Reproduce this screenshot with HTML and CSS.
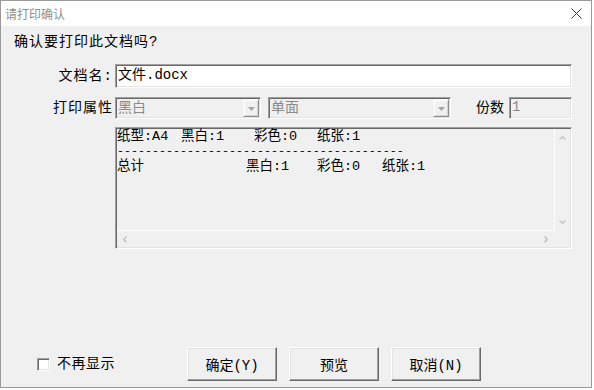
FILE: index.html
```html
<!DOCTYPE html>
<html lang="zh-CN">
<head>
<meta charset="utf-8">
<title>请打印确认</title>
<link rel="stylesheet" href="styles.css">
</head>
<body>
<div class="window">
  <div class="titlebar">
    <span class="title">请打印确认</span>
    <svg class="close" width="11" height="11" viewBox="0 0 11 11"><path d="M0.5 0.5L10.5 10.5M10.5 0.5L0.5 10.5" stroke="#3c3c3c" stroke-width="1" fill="none"/></svg>
  </div>
  <div class="body">
    <div class="question">确认要打印此文档吗?</div>
    <div class="row row-name">
      <span class="label">文档名:</span>
      <div class="edit name">文件.docx</div>
    </div>
    <div class="row row-attr">
      <span class="label">打印属性</span>
      <div class="combo c1"><span class="val">黑白</span><span class="drop"><svg width="7" height="4" viewBox="0 0 7 4"><path d="M0 0H7L3.5 4Z" fill="#a6a6a6"/></svg></span></div>
      <div class="combo c2"><span class="val">单面</span><span class="drop"><svg width="7" height="4" viewBox="0 0 7 4"><path d="M0 0H7L3.5 4Z" fill="#a6a6a6"/></svg></span></div>
      <span class="label2">份数</span>
      <div class="edit copies">1</div>
    </div>
    <div class="listbox">
      <div class="list-content">
        <div class="line"><span class="cell w64">纸型:A4</span><span class="cell w73">黑白:1</span><span class="cell w63">彩色:0</span><span class="cell">纸张:1</span></div>
        <div class="line dashes">-----------------------------------------</div>
        <div class="line"><span class="cell w129">总计</span><span class="cell w71">黑白:1</span><span class="cell w65">彩色:0</span><span class="cell">纸张:1</span></div>
      </div>
      <div class="vscroll">
        <svg width="7" height="4" viewBox="0 0 7 4"><path d="M0.5 3.5L3.5 0.8L6.5 3.5" stroke="#c2c2c2" stroke-width="1.4" fill="none"/></svg>
        <svg width="7" height="4" viewBox="0 0 7 4"><path d="M0.5 0.5L3.5 3.2L6.5 0.5" stroke="#c2c2c2" stroke-width="1.4" fill="none"/></svg>
      </div>
      <div class="hscroll">
        <svg width="4" height="7" viewBox="0 0 4 7"><path d="M3.5 0.5L0.8 3.5L3.5 6.5" stroke="#c2c2c2" stroke-width="1.4" fill="none"/></svg>
        <svg width="4" height="7" viewBox="0 0 4 7"><path d="M0.5 0.5L3.2 3.5L0.5 6.5" stroke="#c2c2c2" stroke-width="1.4" fill="none"/></svg>
      </div>
      <div class="corner"></div>
    </div>
    <div class="footer">
      <label class="check"><span class="box"></span><span class="check-text">不再显示</span></label>
      <div class="buttons">
        <button class="btn" type="button">确定(Y)</button>
        <button class="btn" type="button">预览</button>
        <button class="btn" type="button">取消(N)</button>
      </div>
    </div>
  </div>
</div>
</body>
</html>
```

FILE: styles.css
```css
* { box-sizing: border-box; }
html, body { margin: 0; padding: 0; background: #ffffff; }
body {
  font-family: "Liberation Mono", "Noto Sans CJK SC", monospace;
  font-size: 14px;
  color: #000;
}
.window {
  width: 592px;
  height: 388px;
  border: 1px solid #9a9a9a;
  background: #f0f0f0;
  display: flex;
  flex-direction: column;
}
.titlebar {
  height: 25px;
  flex: none;
  background: #fff;
  display: flex;
  align-items: center;
  justify-content: space-between;
  padding: 0 9px 0 4px;
}
.title {
  font-family: "Noto Sans CJK SC", sans-serif;
  font-size: 12px;
  line-height: 16px;
  color: #8e8e8e;
}
.close { display: block; }
.body {
  flex: 1;
  display: flex;
  flex-direction: column;
  padding: 7px 19px 6px 13px;
}
.question { height: 18px; line-height: 18px; letter-spacing: 1px; }
.row { display: flex; align-items: center; }
.row-name { margin-top: 13px; height: 24px; }
.row-attr { margin-top: 9px; height: 22px; }
.label {
  width: 101px;
  flex: none;
  text-align: right;
  padding-right: 2px;
  letter-spacing: 1px;
  line-height: 20px;
}
.edit {
  border: 1px solid;
  border-color: #a0a0a0 #ffffff #ffffff #a0a0a0;
  box-shadow: inset 1px 1px #696969, inset -1px -1px #e3e3e3;
  padding-left: 2px;
}
.name { width: 457px; height: 24px; background: #fff; line-height: 21px; }
.copies { width: 63px; height: 22px; background: #f0f0f0; color: #8a8a8a; line-height: 19px; }
.combo {
  height: 22px;
  display: flex;
  border: 1px solid;
  border-color: #a0a0a0 #ffffff #ffffff #a0a0a0;
  box-shadow: inset 1px 1px #696969, inset -1px -1px #e3e3e3;
  padding: 1px;
  color: #8a8a8a;
}
.c1 { width: 146px; }
.c2 { width: 183px; margin-left: 7px; }
.val { flex: 1; padding-left: 1px; line-height: 19px; }
.drop {
  width: 16px;
  height: 18px;
  flex: none;
  display: flex;
  align-items: center;
  justify-content: center;
  border: 1px solid;
  border-color: #f5f5f5 #8d8d8d #8d8d8d #f5f5f5;
  box-shadow: inset 1px 1px #fff, inset -1px -1px #d4d4d4;
  background: #f0f0f0;
}
.drop svg { display: block; margin-top: 1px; }
.label2 { margin-left: 25px; width: 28px; margin-right: 5px; line-height: 20px; }
.listbox {
  margin-top: 8px;
  margin-left: 101px;
  width: 457px;
  height: 122px;
  border: 1px solid;
  border-color: #a0a0a0 #ffffff #ffffff #a0a0a0;
  box-shadow: inset 1px 1px #696969, inset -1px -1px #e3e3e3;
  padding: 1px;
  display: grid;
  grid-template-columns: 1fr 15px;
  grid-template-rows: 1fr 16px;
  background: #f0f0f0;
}
.list-content {
  border-right: 1px solid #fff;
  border-bottom: 1px solid #fff;
  font-size: 13.5px;
}
.line { display: flex; height: 15px; line-height: 15px; white-space: pre; }
.cell { flex: none; }
.w64 { width: 64px; }
.w73 { width: 73px; }
.w63 { width: 63px; }
.w129 { width: 129px; }
.w71 { width: 71px; }
.w65 { width: 65px; }
.dashes { font-size: 11.67px; }
.vscroll {
  display: flex;
  flex-direction: column;
  align-items: center;
  justify-content: space-between;
  padding: 7px 0 7px;
}
.vscroll svg, .hscroll svg { display: block; }
.hscroll {
  display: flex;
  align-items: center;
  justify-content: space-between;
  padding: 0 7px 0 6px;
}
.footer {
  margin-top: auto;
  height: 34px;
  display: flex;
  align-items: center;
}
.check {
  width: 173px;
  flex: none;
  display: flex;
  align-items: center;
  padding-left: 23px;
}
.box {
  width: 13px;
  height: 13px;
  background: #fff;
  border: 1px solid;
  border-color: #a0a0a0 #ffffff #ffffff #a0a0a0;
  box-shadow: inset 1px 1px #696969, inset -1px -1px #e3e3e3;
}
.check-text { margin-left: 7px; letter-spacing: 0.5px; line-height: 18px; }
.buttons { display: flex; gap: 12px; }
.btn {
  width: 90px;
  height: 34px;
  padding: 0;
  margin: 0;
  font: inherit;
  color: #000;
  background: #f0f0f0;
  border: 1px solid;
  border-color: #ffffff #696969 #696969 #ffffff;
  box-shadow: inset -1px -1px #a0a0a0, inset 1px 1px #e3e3e3;
}
```
